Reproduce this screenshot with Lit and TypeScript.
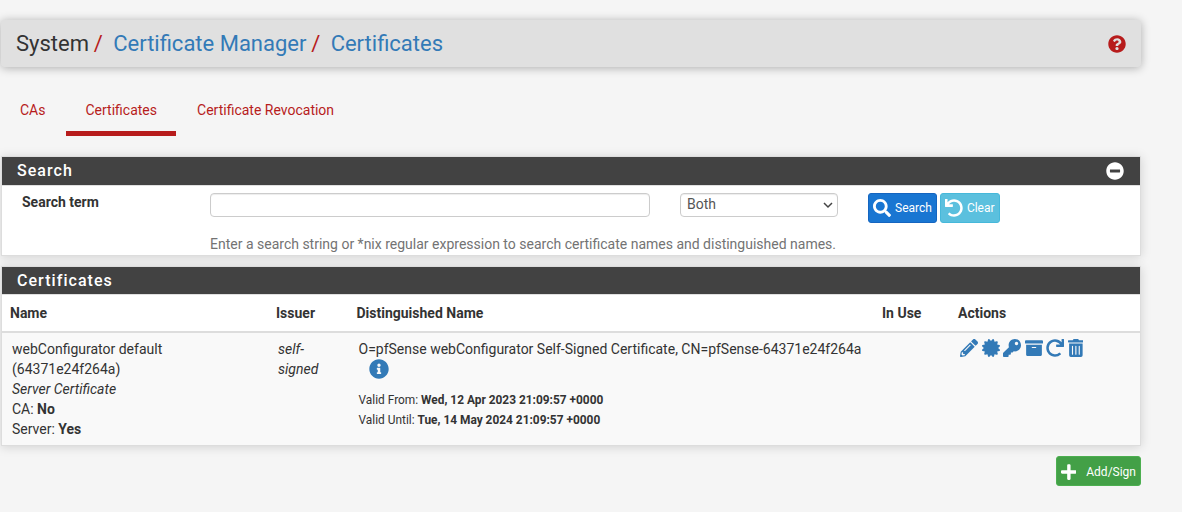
import { LitElement, html, css, svg } from "lit";
import { customElement, property } from "lit/decorators.js";

const ICONS: Record<string, { w: number; d: string }> = {
  help: { w: 512, d: "M504 256c0 136.997-111.043 248-248 248S8 392.997 8 256C8 119.083 119.043 8 256 8s248 111.083 248 248zM262.655 90c-54.497 0-89.255 22.957-116.549 63.758-3.536 5.286-2.353 12.415 2.715 16.258l34.699 26.31c5.205 3.947 12.621 3.008 16.665-2.122 17.864-22.658 30.113-35.797 57.303-35.797 20.429 0 45.698 13.148 45.698 32.958 0 14.976-12.363 22.667-32.534 33.976C247.128 238.528 216 254.941 216 296v4c0 6.627 5.373 12 12 12h56c6.627 0 12-5.373 12-12v-1.333c0-28.462 83.186-29.647 83.186-106.667 0-58.002-60.165-102-116.531-102zM256 338c-25.365 0-46 20.635-46 46 0 25.364 20.635 46 46 46s46-20.636 46-46c0-25.364-20.635-46-46-46z" },
  info: { w: 512, d: "M256 8C119.043 8 8 119.083 8 256c0 136.997 111.043 248 248 248s248-111.003 248-248C504 119.083 392.957 8 256 8zm0 110c23.196 0 42 18.804 42 42s-18.804 42-42 42-42-18.804-42-42 18.804-42 42-42zm56 254c0 6.627-5.373 12-12 12h-88c-6.627 0-12-5.373-12-12v-24c0-6.627 5.373-12 12-12h12v-64h-12c-6.627 0-12-5.373-12-12v-24c0-6.627 5.373-12 12-12h64c6.627 0 12 5.373 12 12v100h12c6.627 0 12 5.373 12 12v24z" },
  minus: { w: 512, d: "M256 8C119 8 8 119 8 256s111 248 248 248 248-111 248-248S393 8 256 8zM124 296c-6.600 0-12-5.400-12-12v-56c0-6.600 5.400-12 12-12h264c6.600 0 12 5.400 12 12v56c0 6.600-5.400 12-12 12H124z" },
  search: { w: 512, d: "M505 442.7L405.3 343c-4.5-4.5-10.6-7-17-7H372c27.6-35.3 44-79.7 44-128C416 93.1 322.9 0 208 0S0 93.1 0 208s93.1 208 208 208c48.3 0 92.7-16.4 128-44v16.3c0 6.4 2.5 12.5 7 17l99.7 99.7c9.4 9.4 24.6 9.4 33.9 0l28.3-28.3c9.4-9.4 9.4-24.6.1-34zM208 336c-70.7 0-128-57.2-128-128 0-70.7 57.2-128 128-128 70.7 0 128 57.2 128 128 0 70.7-57.2 128-128 128z" },
  undo: { w: 512, d: "M212.333 224.333H12c-6.627 0-12-5.373-12-12V12C0 5.373 5.373 0 12 0h48c6.627 0 12 5.373 12 12v78.112C117.773 39.279 184.26 7.47 258.175 8.007c136.906.994 246.448 111.623 246.157 248.532C504.041 393.258 393.12 504 256.333 504c-64.089 0-122.496-24.313-166.51-64.215-5.099-4.622-5.334-12.554-.467-17.42l33.967-33.967c4.474-4.474 11.662-4.717 16.401-.525C170.76 415.336 211.58 432 256.333 432c97.268 0 176-78.716 176-176 0-97.267-78.716-176-176-176-58.496 0-110.28 28.476-142.274 72.333h98.274c6.627 0 12 5.373 12 12v48c0 6.627-5.373 12-12 12z" },
  pencil: { w: 512, d: "M497.9 142.1l-46.1 46.1c-4.7 4.7-12.3 4.7-17 0l-111-111c-4.7-4.7-4.7-12.3 0-17l46.1-46.1c18.7-18.7 49.1-18.7 67.9 0l60.1 60.1c18.8 18.7 18.8 49.1 0 67.9zM284.2 99.8L21.6 362.4.4 483.9c-2.9 16.4 11.4 30.6 27.8 27.8l121.5-21.3 262.6-262.6c4.7-4.7 4.7-12.3 0-17l-111-111c-4.8-4.7-12.4-4.7-17.1 0zM124.1 339.9c-5.5-5.5-5.5-14.3 0-19.8l154-154c5.5-5.5 14.3-5.5 19.8 0s5.5 14.3 0 19.8l-154 154c-5.5 5.5-14.3 5.5-19.8 0zM88 424h48v36.3l-64.5 11.3-31.1-31.1L51.7 376H88v48z" },
  certificate: { w: 512, d: "M458.622 255.92l45.985-45.005c13.708-12.977 7.316-36.039-10.664-40.339l-62.65-15.99 17.661-62.015c4.991-17.838-11.829-34.663-29.661-29.671l-61.994 17.667-15.984-62.671C337.085.197 313.765-6.276 300.99 7.228L256 53.57 211.011 7.229c-12.63-13.351-36.047-7.234-40.325 10.668l-15.984 62.671-61.995-17.667C74.87 57.907 58.056 74.738 63.046 92.572l17.661 62.015-62.65 15.99C.069 174.878-6.31 197.944 7.392 210.915l45.985 45.005-45.985 45.004c-13.708 12.977-7.316 36.039 10.664 40.339l62.65 15.99-17.661 62.015c-4.991 17.838 11.829 34.663 29.661 29.671l61.994-17.667 15.984 62.671c4.439 18.575 27.696 24.018 40.325 10.668L256 458.61l44.989 46.001c12.5 13.488 35.987 7.486 40.325-10.668l15.984-62.671 61.994 17.667c17.836 4.994 34.651-11.837 29.661-29.671l-17.661-62.015 62.65-15.99c17.987-4.302 24.366-27.367 10.664-40.339l-45.984-45.004z" },
  key: { w: 512, d: "M512 176.001C512 273.203 433.202 352 336 352c-11.22 0-22.19-1.062-32.827-3.069l-24.012 27.014A23.999 23.999 0 0 1 261.223 384H224v40c0 13.255-10.745 24-24 24h-40v40c0 13.255-10.745 24-24 24H24c-13.255 0-24-10.745-24-24v-78.059c0-6.365 2.529-12.47 7.029-16.971l161.802-161.802C163.108 213.814 160 195.271 160 176 160 78.798 238.797.001 335.999 0 433.488-.001 512 78.511 512 176.001zM336 128c0 26.51 21.49 48 48 48s48-21.49 48-48-21.49-48-48-48-48 21.49-48 48z" },
  archive: { w: 512, d: "M32 448c0 17.7 14.3 32 32 32h384c17.7 0 32-14.3 32-32V160H32v288zm160-212c0-6.6 5.4-12 12-12h104c6.6 0 12 5.4 12 12v8c0 6.6-5.4 12-12 12H204c-6.6 0-12-5.4-12-12v-8zM480 32H32C14.3 32 0 46.3 0 64v48c0 8.8 7.2 16 16 16h480c8.8 0 16-7.2 16-16V64c0-17.7-14.3-32-32-32z" },
  redo: { w: 512, d: "M500.33 0h-47.41a12 12 0 0 0-12 12.57l4 82.76A247.42 247.42 0 0 0 256 8C119.34 8 7.9 119.53 8 256.19 8.1 393.07 119.1 504 256 504a247.1 247.1 0 0 0 166.18-63.91 12 12 0 0 0 .48-17.43l-34-34a12 12 0 0 0-16.38-.55A176 176 0 1 1 402.1 157.8l-101.53-4.87a12 12 0 0 0-12.57 12v47.41a12 12 0 0 0 12 12h200.33a12 12 0 0 0 12-12V12a12 12 0 0 0-12-12z" },
  trash: { w: 448, d: "M32 464a48 48 0 0 0 48 48h288a48 48 0 0 0 48-48V128H32zm272-256a16 16 0 0 1 32 0v224a16 16 0 0 1-32 0zm-96 0a16 16 0 0 1 32 0v224a16 16 0 0 1-32 0zm-96 0a16 16 0 0 1 32 0v224a16 16 0 0 1-32 0zM432 32H312l-9.4-18.7A24 24 0 0 0 281.1 0H166.8a23.72 23.72 0 0 0-21.4 13.3L136 32H16A16 16 0 0 0 0 48v32a16 16 0 0 0 16 16h416a16 16 0 0 0 16-16V48a16 16 0 0 0-16-16z" },
  plus: { w: 448, d: "M416 208H272V64c0-17.67-14.33-32-32-32h-32c-17.67 0-32 14.33-32 32v144H32c-17.67 0-32 14.33-32 32v32c0 17.67 14.33 32 32 32h144v144c0 17.67 14.33 32 32 32h32c17.67 0 32-14.33 32-32V304h144c17.67 0 32-14.33 32-32v-32c0-17.67-14.33-32-32-32z" },
};

@customElement("pf-icon")
class PfIcon extends LitElement {
  @property() name = "";
  @property({ type: Number }) size = 18;
  static styles = css`
    :host { display: inline-flex; flex: none; }
    svg { display: block; fill: currentColor; }
  `;
  render() {
    const icon = ICONS[this.name];
    return html`<svg width=${(this.size * icon.w) / 512} height=${this.size} viewBox="0 0 ${icon.w} 512">
      ${svg`<path fill-rule="evenodd" d=${icon.d}></path>`}
    </svg>`;
  }
}

@customElement("app-root")
class AppRoot extends LitElement {
  static styles = css`
    * { box-sizing: border-box; }
    :host {
      display: block;
      height: 512px;
      overflow: hidden;
      background: #f5f5f5;
      color: #333;
      font: 14px/20px Roboto, sans-serif;
    }
    .page { width: 1140px; margin-left: 1px; padding-top: 20px; }
    .crumbs {
      display: flex;
      align-items: center;
      height: 47px;
      padding: 0 15px;
      background: #e0e0e0;
      border-radius: 4px;
      box-shadow: 0 1px 10px rgba(0, 0, 0, 0.3);
      font-size: 22px;
      line-height: 24px;
    }
    .slash { color: #b71c1c; margin: 0 10.3px 0 4.8px; }
    .crumbs a { color: #337ab7; }
    .crumbs pf-icon { margin-left: auto; color: #b71c1c; }
    .tabs { display: flex; margin-top: 20px; height: 49px; color: #b71c1c; }
    .tab { padding: 13px 20px 0 19px; border-bottom: 5px solid transparent; margin-right: 1px; }
    .tab.active { border-color: #b71c1c; padding-right: 19px; margin-right: 2px; }
    .panel {
      background: #fff;
      border: 1px solid #ddd;
      box-shadow: 0 1px 10px rgba(0, 0, 0, 0.15);
    }
    .search { margin-top: 20px; height: 100px; }
    .certs { margin-top: 10px; height: 180px; }
    .head {
      display: flex;
      align-items: center;
      justify-content: space-between;
      height: 28px;
      padding: 0 16px 0 15px;
      background: #424242;
      color: #fff;
      font-size: 16px;
      font-weight: 500;
      letter-spacing: 1.05px;
    }
    .certs .head { height: 27px; }
    .form {
      display: grid;
      grid-template-columns: 158px 440px 158px auto;
      column-gap: 30px;
      border-top: 1px solid #e0e0e0;
      padding: 7px 0 0 20px;
      align-items: start;
    }
    .label { font-weight: 700; line-height: 19px; }
    .input, .select {
      height: 24px;
      border: 1px solid #ccc;
      border-radius: 4px;
      box-shadow: inset 0 1px 1px rgba(0, 0, 0, 0.075);
      color: #555;
    }
    .select { display: flex; justify-content: space-between; align-items: center; padding: 0 4px 2px 6px; }
    .select svg { margin-top: 2px; }
    .buttons { display: flex; gap: 3px; }
    .btn {
      display: inline-flex;
      align-items: center;
      height: 30px;
      padding: 0 4px;
      border: 1px solid;
      border-radius: 3px;
      color: #fff;
      font-size: 12px;
      line-height: 18px;
    }
    .primary { background: #1976d2; border-color: #1565c0; }
    .light { background: #5bc0de; border-color: #46b8da; }
    .green { background: #43a047; border-color: #4caf50; }
    .btn span { margin-left: 4px; }
    .hint { grid-column: 2 / span 3; color: #737373; margin-top: 11px; }
    .row { display: grid; grid-template-columns: 266px 80.5px 525.5px 76px 1fr; }
    .thead {
      height: 39px;
      padding: 8px 0 0 8px;
      font-weight: 700;
      border-top: 1px solid #e0e0e0;
      border-bottom: 2px solid #ddd;
    }
    .tbody { height: 112px; padding: 6px 0 0 10px; background: #f9f9f9; }
    .info { display: flex; padding-left: 10px; height: 20px; align-items: center; color: #337ab7; }
    .dates { font-size: 11.9px; margin-top: 11px; }
    .actions { display: flex; gap: 3.5px; color: #337ab7; }
    .foot { display: flex; justify-content: flex-end; margin-top: 10px; }
    .foot .btn { padding-top: 1px; }
    .foot .btn span { margin-left: 10px; }
  `;

  render() {
    return html`<div class="page">
      <header class="crumbs">
        System<span class="slash">/</span><a>Certificate Manager</a><span class="slash">/</span><a>Certificates</a>
        <pf-icon name="help" size="18"></pf-icon>
      </header>
      <nav class="tabs">
        <div class="tab">CAs</div>
        <div class="tab active">Certificates</div>
        <div class="tab">Certificate Revocation</div>
      </nav>
      <section class="panel search">
        <div class="head">Search<pf-icon name="minus" size="18"></pf-icon></div>
        <div class="form">
          <div class="label">Search term</div>
          <div class="input"></div>
          <div class="select">
            Both
            <svg width="10" height="7" viewBox="0 0 10 7" fill="none" stroke="#444" stroke-width="1.5"><path d="M1 1l4 4 4-4" /></svg>
          </div>
          <div class="buttons">
            <div class="btn primary"><pf-icon name="search"></pf-icon><span>Search</span></div>
            <div class="btn light"><pf-icon name="undo"></pf-icon><span>Clear</span></div>
          </div>
          <div class="hint">Enter a search string or *nix regular expression to search certificate names and distinguished names.</div>
        </div>
      </section>
      <section class="panel certs">
        <div class="head">Certificates</div>
        <div class="row thead">
          <div>Name</div><div>Issuer</div><div>Distinguished Name</div><div>In Use</div><div>Actions</div>
        </div>
        <div class="row tbody">
          <div>
            webConfigurator default<br />(64371e24f264a)<br /><i>Server Certificate</i><br />CA: <b>No</b><br />Server: <b>Yes</b>
          </div>
          <div><i>self-<br />signed</i></div>
          <div>
            O=pfSense webConfigurator Self-Signed Certificate, CN=pfSense-64371e24f264a
            <div class="info"><pf-icon name="info" size="20"></pf-icon></div>
            <div class="dates">
              Valid From: <b>Wed, 12 Apr 2023 21:09:57 +0000</b><br />Valid Until: <b>Tue, 14 May 2024 21:09:57 +0000</b>
            </div>
          </div>
          <div></div>
          <div class="actions">
            ${["pencil", "certificate", "key", "archive", "redo", "trash"].map((n) => html`<pf-icon name=${n}></pf-icon>`)}
          </div>
        </div>
      </section>
      <div class="foot"><div class="btn green"><pf-icon name="plus"></pf-icon><span>Add/Sign</span></div></div>
    </div>`;
  }
}
